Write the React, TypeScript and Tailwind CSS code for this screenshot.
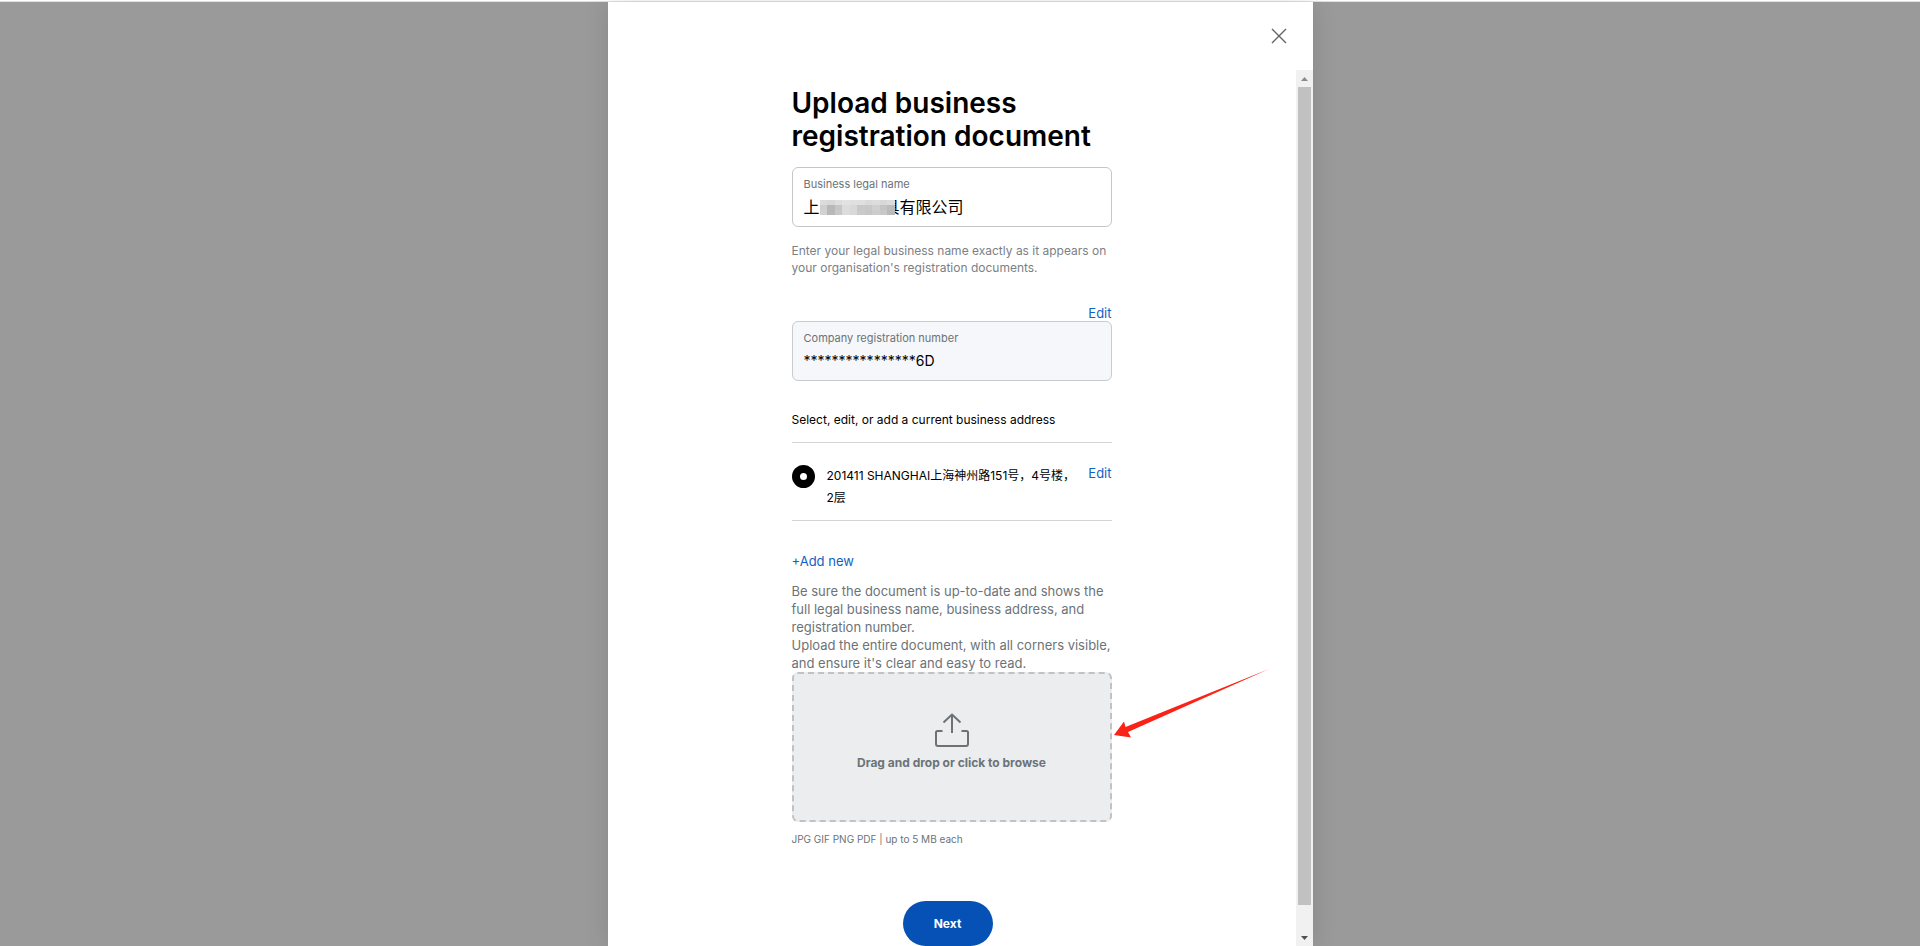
import React, { useState } from 'react';

// greys of the pixelated strip that hides part of the company name
const MOSAIC = [
    ['#dcdcdc', '#d8d8d8', '#dedede', '#e2e2e2', '#e0e0e0', '#e0e0e0', '#dadada', '#dddddd', '#d8d8d8', '#dcdcdc'],
    ['#cfcfcf', '#b8b8b8', '#c6c6c6', '#dcdcdc', '#d8d8d8', '#c8c8c8', '#c8c8c8', '#d0d0d0', '#c4c4c4', '#bcbcbc'],
    ['#d2d2d2', '#b8b8b8', '#c8c8c8', '#dcdcdc', '#d8d8d8', '#cacaca', '#c6c6c6', '#cdcdcd', '#c8c8c8', '#bababa'],
];

function UploadIcon() {
    return (
        <svg width="34" height="34" viewBox="0 0 34 34" fill="none" stroke="#6c7378" strokeWidth="2" aria-hidden="true">
            <path d="M17 20V1.5M8.5 9.5L17 1.5L25.500 9.500" strokeLinejoin="round" />
            <path d="M7.500 18H2.500a1.500 1.500 0 0 0-1.500 1.500V31a2 2 0 0 0 2 2h28a2 2 0 0 0 2-2V19.500a1.500 1.500 0 0 0-1.500-1.500H26.500" />
        </svg>
    );
}

function Scrollbar() {
    return (
        <div className="flex w-[17px] shrink-0 flex-col items-center bg-[#f1f1f1]" aria-hidden="true">
            <div className="flex h-[17px] items-center">
                <svg width="7" height="4" viewBox="0 0 7 4"><path d="M3.5 0L7 4H0z" fill="#8b8b8b" /></svg>
            </div>
            <div className="w-[13px] grow bg-[#c1c1c1]" />
            <div className="h-6" />
            <div className="flex h-[17px] items-center">
                <svg width="7" height="4" viewBox="0 0 7 4"><path d="M0 0h7L3.500 4z" fill="#505050" /></svg>
            </div>
        </div>
    );
}

export default function App() {
    const [name, setName] = useState('上\u3000\u3000\u3000\u3000具有限公司');
    const [regNumber, setRegNumber] = useState('****************6D');
    const [editing, setEditing] = useState(false);

    return (
        <div className="flex h-screen flex-col overflow-hidden bg-[#9a9a9a] font-['Inter','Noto_Sans_CJK_SC',sans-serif] text-black">
            <div className="h-[2px] shrink-0 border-b border-[#dfe1e1] bg-white" />

            <main className="mx-auto flex min-h-0 w-full max-w-[705px] grow flex-col bg-white shadow-[0_0_24px_rgba(0,0,0,0.12)]">
                <div className="flex h-[68px] shrink-0 items-start justify-end pt-[22px] pr-[22px]">
                    <button type="button" aria-label="Close" className="p-1">
                        <svg width="16" height="16" viewBox="0 0 16 16" stroke="#5f6366" strokeWidth="1.4">
                            <path d="M1 1l14 14M15 1L1 15" />
                        </svg>
                    </button>
                </div>

                <div className="flex min-h-0 grow">
                    <div className="grow overflow-y-auto [scrollbar-width:none]">
                        <form className="mx-auto w-80 pt-[17px]" onSubmit={(e) => e.preventDefault()}>
                            <h1 className="text-[28px] leading-[33px] font-semibold">
                                Upload business registration document
                            </h1>

                            {/* Business name */}
                            <div className="relative mt-[14px] h-[60px] rounded-md border border-[#c4c6c8] px-[11px] pt-2">
                                <label htmlFor="name" className="block text-[11px] leading-4 text-[#6c7378]">Business legal name</label>
                                <input
                                    id="name"
                                    value={name}
                                    onChange={(e) => setName(e.target.value)}
                                    className="block h-7 w-full text-base outline-none"
                                />
                                <div className="absolute top-8 left-[27px] grid w-[75px] grid-cols-10" aria-hidden="true">
                                    {MOSAIC.flat().map((c, i) => (
                                        <div key={i} className="h-[5px]" style={{ backgroundColor: c }} />
                                    ))}
                                </div>
                            </div>
                            <p className="mt-[15px] text-[12px] leading-[17px] text-[#7b8084]">
                                Enter your legal business name exactly as it appears on your organisation's registration documents.
                            </p>

                            {/* Registration number */}
                            <div className="mt-[29px] flex justify-end">
                                <button type="button" onClick={() => setEditing(true)} className="text-[13px] leading-4 text-[#0f62c4]">Edit</button>
                            </div>
                            <div className="h-[60px] rounded-md border border-[#c9cbce] bg-[#f5f7fa] px-[11px] pt-2">
                                <label htmlFor="reg" className="block text-[11px] leading-4 text-[#6c7378]">Company registration number</label>
                                <input
                                    id="reg"
                                    value={regNumber}
                                    readOnly={!editing}
                                    onChange={(e) => setRegNumber(e.target.value)}
                                    className="block h-7 w-full text-[14px] outline-none"
                                />
                            </div>

                            {/* Address */}
                            <p className="mt-[30px] text-[12px] leading-[18px]">Select, edit, or add a current business address</p>
                            <div className="mt-[13px] flex border-y border-[#d2d4d6] pt-[22px] pb-[11px]">
                                <input
                                    id="address"
                                    type="radio"
                                    name="address"
                                    defaultChecked
                                    className="size-[23px] shrink-0 appearance-none rounded-full border-8 border-black bg-white"
                                />
                                <label htmlFor="address" className="ml-3 min-w-0 grow pr-3 text-[12px] leading-[22px]">
                                    201411 SHANGHAI上海神州路151号，4号楼，2层
                                </label>
                                <button type="button" className="self-start text-[13px] leading-4 text-[#0f62c4]">Edit</button>
                            </div>
                            <button type="button" className="mt-[31px] block text-[13px] leading-[18px] text-[#0f62c4]">+Add new</button>

                            {/* Document upload */}
                            <div className="mt-3 text-[13px] leading-[18px] text-[#6c7378]">
                                <p>Be sure the document is up-to-date and shows the full legal business name, business address, and registration number.</p>
                                <p>Upload the entire document, with all corners visible, and ensure it's clear and easy to read.</p>
                            </div>
                            <div className="relative">
                                <button
                                    type="button"
                                    className="flex h-[150px] w-full flex-col items-center rounded-md border-2 border-dashed border-[#c0c2c3] bg-[#ebedee] pt-[39px] text-[#6c7378]"
                                >
                                    <UploadIcon />
                                    <span className="mt-[7px] text-[12px] leading-[18px] font-bold">Drag and drop or click to browse</span>
                                </button>
                                <svg className="absolute -top-1 left-full ml-[2px]" width="156" height="72" viewBox="0 0 156 72" fill="#fb2317" aria-hidden="true">
                                    <path d="M0 67L10 53.500L11.500 59L155 1L14 64L17 69.500z" />
                                </svg>
                            </div>
                            <p className="mt-[9px] text-[10px] leading-4 text-[#6c7378]">JPG GIF PNG PDF | up to 5 MB each</p>

                            <div className="mt-[54px] flex justify-center pr-2">
                                <button type="submit" className="h-[45px] w-[90px] rounded-full bg-[#0551b5] text-[12px] font-bold text-white">Next</button>
                            </div>
                        </form>
                    </div>
                    <Scrollbar />
                </div>
            </main>
        </div>
    );
}
